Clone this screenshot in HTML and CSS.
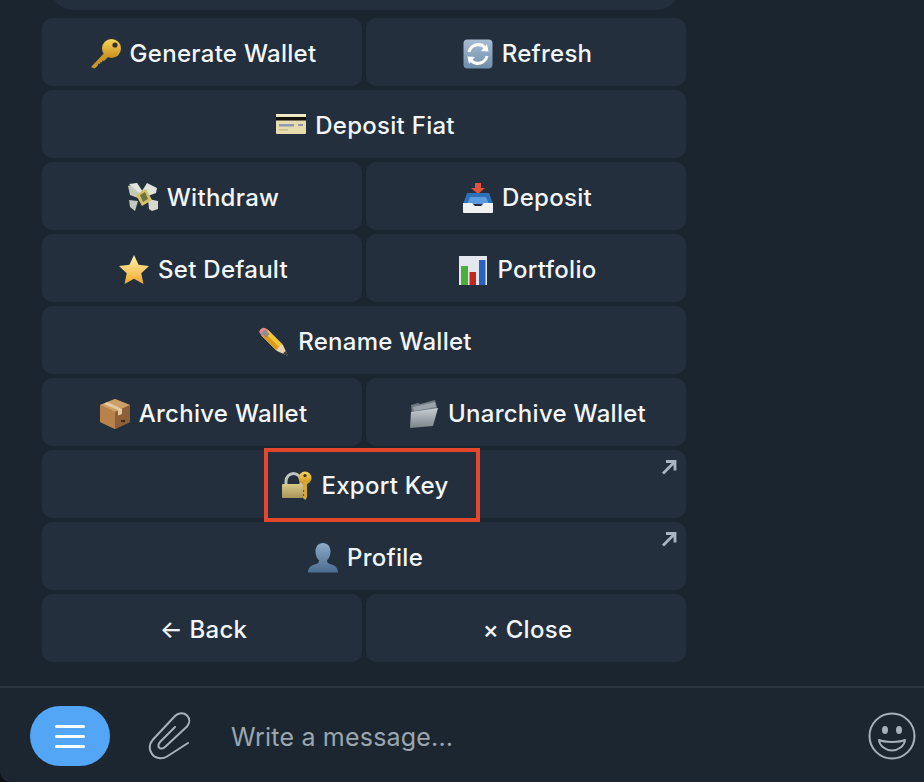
FILE: index.html
```html
<!DOCTYPE html>
<html>
<head>
  <title>Wallet menu</title>
  <meta charset="UTF-8">
  <link rel="stylesheet" href="styles.css">
</head>
<body>
  <!-- emoji drawn once, used by the buttons -->
  <svg class="sprites" width="0" height="0" aria-hidden="true">
    <defs>
      <linearGradient id="gold" x1="0" y1="0" x2="0" y2="1"><stop offset="0" stop-color="#f6d65a"/><stop offset="1" stop-color="#c98f1e"/></linearGradient>
      <linearGradient id="starFill" x1="0" y1="0" x2="0" y2="1"><stop offset="0" stop-color="#fff3b0"/><stop offset="1" stop-color="#f2a92a"/></linearGradient>
      <linearGradient id="steel" x1="0" y1="0" x2="0" y2="1"><stop offset="0" stop-color="#a9bdd2"/><stop offset="1" stop-color="#6f8daa"/></linearGradient>
      <linearGradient id="person" x1="0" y1="0" x2="0" y2="1"><stop offset="0" stop-color="#8caac8"/><stop offset="1" stop-color="#4a6c90"/></linearGradient>
      <linearGradient id="brass" x1="0" y1="0" x2="0" y2="1"><stop offset="0" stop-color="#d8c987"/><stop offset="1" stop-color="#a8965a"/></linearGradient>
      <linearGradient id="folder" x1="0" y1="0" x2="0" y2="1"><stop offset="0" stop-color="#c8cfd4"/><stop offset="1" stop-color="#7a848b"/></linearGradient>
    </defs>
    <symbol id="e-key" viewBox="0 0 30 30">
      <path d="M0 28 16 11l4 4-7 7-1.500-.5-.5 2-1.500-.5-.5 2-1.500-.5-1 2.500-3 2.500Z" fill="#c9962a"/>
      <circle cx="20.500" cy="9.500" r="9.500" fill="url(#gold)"/>
      <circle cx="24" cy="6" r="2.600" fill="#3a3020"/>
    </symbol>
    <symbol id="e-refresh" viewBox="0 0 30 30">
      <rect x="0.500" y="0.500" width="29" height="29" rx="4" fill="url(#steel)"/>
      <path d="M6 13a9.500 9.500 0 0 1 16-4.500" fill="none" stroke="#fff" stroke-width="3"/>
      <path d="M25.500 12.500 18 12l6-7Z" fill="#fff"/>
      <path d="M24 17a9.500 9.500 0 0 1-16 4.500" fill="none" stroke="#fff" stroke-width="3"/>
      <path d="M4.500 17.500 12 18l-6 7Z" fill="#fff"/>
    </symbol>
    <symbol id="e-card" viewBox="0 0 30 30">
      <rect x="0" y="3" width="30" height="20" rx="1" fill="#e6dcae"/>
      <rect x="0" y="3" width="30" height="2.500" fill="#f2ecc8"/>
      <rect x="0" y="6" width="30" height="3.500" fill="#14130f"/>
      <rect x="3" y="13" width="15" height="2.500" fill="#8d97b8"/>
      <rect x="22" y="13" width="5" height="2" fill="#8f97a8"/>
      <rect x="3" y="18" width="9" height="1.500" fill="#c9bd8c"/>
    </symbol>
    <symbol id="e-money" viewBox="0 0 30 30">
      <path d="M0 3 9 0l6 9-5 6-8-3Z" fill="#c3c9bb"/>
      <path d="M1 1 9 0l5 8-3 2Z" fill="#e2e5dc"/>
      <path d="M29 5 19 0l-5 8 6 5 8-3Z" fill="#dfe3d8"/>
      <path d="M1 17l9 1-3 10-5-4Z" fill="#c4c9bc"/>
      <path d="M30 18l-10-2 1 10 3 2 6-2Z" fill="#d6dacd"/>
      <path d="M8 12l10-6 6 11-10 6Z" fill="#d5c168"/>
      <path d="M12 12l5-3 3 7-5 3Z" fill="#6d7440"/>
    </symbol>
    <symbol id="e-inbox" viewBox="0 0 30 30">
      <path d="M12 0h6v5h4l-7 6-7-6h4Z" fill="#e2533f"/>
      <path d="M4 10h22l4 11H0Z" fill="#2f6fb5"/>
      <path d="M7 14h16l3 7H4Z" fill="#5a9be0"/>
      <path d="M0 20h9l3 3h6l3-3h9v9a1 1 0 0 1-1 1H1a1 1 0 0 1-1-1Z" fill="#f0f2f2"/>
    </symbol>
    <symbol id="e-star" viewBox="0 0 30 30">
      <path d="M15 0l4.600 9.800 10.400 1.300-7.700 7.200 2.100 10.700L15 23.700 5.600 29l2.100-10.700L0 11.100l10.400-1.300Z" fill="url(#starFill)"/>
    </symbol>
    <symbol id="e-chart" viewBox="0 0 30 30">
      <rect x="1" y="1" width="28" height="29" fill="#e4e8ee"/>
      <rect x="3" y="11" width="7" height="19" fill="#4cae3a"/>
      <rect x="11.500" y="17" width="6.500" height="13" fill="#c4281c"/>
      <rect x="21" y="5" width="6.500" height="25" fill="#2a62c0"/>
    </symbol>
    <symbol id="e-pencil" viewBox="0 0 30 30">
      <path d="M8.500 2.500 24 18l5 11-11-5L2.500 8.500Z" fill="#e6d3ad"/>
      <path d="M8.500 2.500 23 17l-6 6L2.500 8.500Z" fill="#f2c533"/>
      <path d="M5.500 5.500 20 20l-3 3L2.500 8.500Z" fill="#d99a20"/>
      <path d="M26.500 24 30 30l-6-3.500Z" fill="#3a3a3a"/>
      <path d="M1 3C3 .5 5 0 7 1.500L9.500 4 4 9.500 1.500 7C0 5.500 0 4.500 1 3Z" fill="#e58a85"/>
      <path d="M6 2.500 10.500 7 7 10.500 2.500 6Z" fill="#8b8b92"/>
    </symbol>
    <symbol id="e-box" viewBox="0 0 30 30">
      <path d="M15 0 30 6v17l-15 7L0 23V6Z" fill="#a9743f"/>
      <path d="M0 6l15 7 15-7L15 0Z" fill="#cf9f68"/>
      <path d="M15 13v17L0 23V6Z" fill="#b9824a"/>
      <path d="M15 13v17l15-7V6Z" fill="#8d6037"/>
      <path d="M7 3l15 7v5l-4 1.500V11L4 5Z" fill="#e3c9a4"/>
      <rect x="21" y="21" width="4" height="2" fill="#3f2a16"/>
    </symbol>
    <symbol id="e-folder" viewBox="0 0 30 30">
      <path d="M2 6 9 4l2 1 15-4 2 7-4 10H3Z" fill="#6d7880"/>
      <path d="M4 8 26 3l1 5-22 4Z" fill="#9aa3a9"/>
      <path d="M1 29 2 13l27-4-5 18Z" fill="url(#folder)"/>
    </symbol>
    <symbol id="e-lock" viewBox="0 0 30 30">
      <path d="M4 14V10a7.500 7.500 0 0 1 15 0v4" fill="none" stroke="#bdc3c0" stroke-width="3"/>
      <rect x="0" y="13" width="21" height="14" rx="1" fill="url(#brass)"/>
      <circle cx="23" cy="7" r="6.500" fill="url(#gold)"/>
      <circle cx="23" cy="4.500" r="1.600" fill="#3a3020"/>
      <path d="M21 11h4v15l-1.500 3-2.500-2v-2l1.500-1-1.500-1v-2l1.500-1-1.500-1Z" fill="#d9a633"/>
    </symbol>
    <symbol id="e-person" viewBox="0 0 30 30">
      <path d="M15 0c5 0 7.500 4 7.500 8.500 0 4-1.500 7-3.500 9 0 2 1 3 3 3.500 4 1 8 3 8 8.500H0c0-5.500 4-7.500 8-8.500 2-.5 3-1.500 3-3.500-2-2-3.500-5-3.500-9C7.500 4 10 0 15 0Z" fill="url(#person)"/>
    </symbol>
  </svg>

  <div class="chat">
    <div class="bubble"></div>

    <div class="keyboard">
      <div class="kb-row">
        <button class="kb-btn"><svg class="emoji"><use href="#e-key"/></svg>Generate Wallet</button>
        <button class="kb-btn"><svg class="emoji"><use href="#e-refresh"/></svg>Refresh</button>
      </div>
      <div class="kb-row">
        <button class="kb-btn"><svg class="emoji"><use href="#e-card"/></svg>Deposit Fiat</button>
      </div>
      <div class="kb-row">
        <button class="kb-btn"><svg class="emoji"><use href="#e-money"/></svg>Withdraw</button>
        <button class="kb-btn"><svg class="emoji"><use href="#e-inbox"/></svg>Deposit</button>
      </div>
      <div class="kb-row">
        <button class="kb-btn"><svg class="emoji"><use href="#e-star"/></svg>Set Default</button>
        <button class="kb-btn"><svg class="emoji"><use href="#e-chart"/></svg>Portfolio</button>
      </div>
      <div class="kb-row">
        <button class="kb-btn"><svg class="emoji"><use href="#e-pencil"/></svg>Rename Wallet</button>
      </div>
      <div class="kb-row">
        <button class="kb-btn"><svg class="emoji"><use href="#e-box"/></svg>Archive Wallet</button>
        <button class="kb-btn"><svg class="emoji"><use href="#e-folder"/></svg>Unarchive Wallet</button>
      </div>
      <div class="kb-row">
        <button class="kb-btn">
          <span class="highlight"></span>
          <svg class="emoji"><use href="#e-lock"/></svg>Export Key
          <svg class="corner-arrow" viewBox="0 0 16 16"><path d="M2 14.500 13.500 3M5 2.500h9v9" fill="none" stroke="#aab6c4" stroke-width="2.800"/></svg>
        </button>
      </div>
      <div class="kb-row">
        <button class="kb-btn">
          <svg class="emoji"><use href="#e-person"/></svg>Profile
          <svg class="corner-arrow" viewBox="0 0 16 16"><path d="M2 14.500 13.500 3M5 2.500h9v9" fill="none" stroke="#aab6c4" stroke-width="2.800"/></svg>
        </button>
      </div>
      <div class="kb-row">
        <button class="kb-btn">← Back</button>
        <button class="kb-btn">× Close</button>
      </div>
    </div>
  </div>

  <div class="composer">
    <button class="menu-btn" aria-label="Menu">
      <span class="menu-line"></span>
      <span class="menu-line"></span>
      <span class="menu-line"></span>
    </button>
    <svg class="attach" viewBox="0 0 44 48">
      <path d="M40 31 19 44.500c-5 3-12 2-15-2.500s-3-10 1-14.500L27 4c3.500-3.500 9-3.500 12-.5s3 7.500 0 11L17 35c-2 2-5 2-6 .5s-.5-4 1.500-6L27 15" fill="none" stroke="#a7b1ba" stroke-width="2" stroke-linecap="round"/>
    </svg>
    <div class="msg-input">Write a message...</div>
    <svg class="smile" viewBox="0 0 48 48">
      <circle cx="24" cy="24" r="22.500" fill="none" stroke="#a7b1ba" stroke-width="2"/>
      <ellipse cx="17" cy="18" rx="3" ry="4" fill="#a7b1ba"/>
      <ellipse cx="31" cy="18" rx="3" ry="4" fill="#a7b1ba"/>
      <path d="M11 28C16 30.500 32 30.500 37 28 36.500 34 30 38.500 24 38.500S11.500 34 11 28Z" fill="none" stroke="#a7b1ba" stroke-width="2" stroke-linejoin="round"/>
    </svg>
  </div>
</body>
</html>
```

FILE: styles.css
```css
html, body { margin: 0; height: 100%; }
body {
  width: 924px;
  height: 782px;
  overflow: hidden;
  background: #0c0e10;
  font-family: Inter, "Noto Sans", sans-serif;
  display: flex;
  flex-direction: column;
}
.sprites { position: absolute; }

.chat {
  flex: 1;
  min-height: 0;
  background: #1a2530;
  padding: 0 238px 0 42px;
  display: flex;
  flex-direction: column;
}
/* bottom of the message above the keyboard, cut by the window */
.bubble {
  flex: none;
  height: 40px;
  margin: -30px 6px 8px 8px;
  background: #232f3d;
  border-radius: 0 0 24px 24px;
}

.keyboard { display: flex; flex-direction: column; gap: 4px; }
.kb-row { display: flex; gap: 4px; }
.kb-btn {
  flex: 1 1 0;
  position: relative;
  box-sizing: border-box;
  height: 68px;
  display: flex;
  align-items: center;
  justify-content: center;
  gap: 9px;
  padding: 3px 0 0 3px;
  border: none;
  border-radius: 10px;
  background: #232f3d;
  color: #f3f6f8;
  font: 500 24px Inter, "Noto Sans", sans-serif;
  letter-spacing: .28px;
  white-space: nowrap;
}
.emoji { width: 30px; height: 30px; flex: none; }
.corner-arrow { position: absolute; top: 9px; right: 9px; width: 16px; height: 16px; }

/* red marker round the Export Key label */
.highlight {
  position: absolute;
  left: 222px;
  top: -2px;
  width: 208px;
  height: 66px;
  border: 4px solid #e4472b;
}

.composer {
  height: 96px;
  flex: none;
  box-sizing: border-box;
  border-top: 2px solid #2a3640;
  border-bottom-left-radius: 10px;
  background: #1c2630;
  display: flex;
  align-items: center;
  padding: 2px 8px 0 30px;
}
.menu-btn {
  width: 80px;
  height: 60px;
  flex: none;
  border: none;
  padding: 0;
  border-radius: 30px;
  background: #53a6f6;
  display: flex;
  flex-direction: column;
  align-items: center;
  justify-content: center;
  gap: 7px;
}
.menu-line { width: 30px; height: 3px; border-radius: 2px; background: #fff; }
.attach { width: 44px; height: 48px; margin-left: 38px; flex: none; }
.msg-input { flex: 1; margin-left: 39px; padding-top: 2px; color: #9aa6b0; font-size: 25px; letter-spacing: .2px; }
.smile { width: 48px; height: 48px; flex: none; }
```
